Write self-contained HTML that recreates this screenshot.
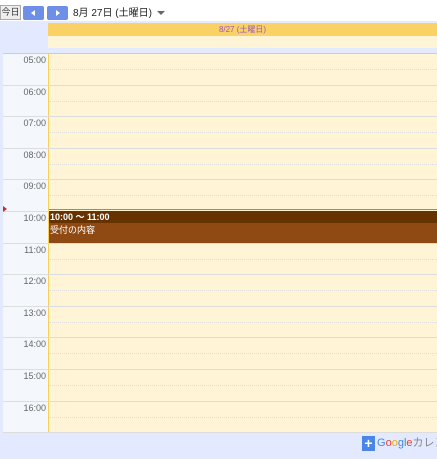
<!DOCTYPE html>
<html><head><meta charset="utf-8"><style>
*{margin:0;padding:0;box-sizing:border-box}
html,body{width:437px;height:459px;overflow:hidden}
body{background:#fff;font-family:"Liberation Sans","Noto Sans CJK JP",sans-serif;position:relative}
.abs{position:absolute}
</style></head><body>
<div class="abs" style="left:0;top:5px;width:21px;height:15px;border:1px solid #aaa;background:#eee;font-size:9px;line-height:13px;text-align:center;color:#333;white-space:nowrap;overflow:hidden">今日</div>
<div class="abs" style="left:23px;top:6px;width:21px;height:14px;background:#6d8fe8;border-radius:2px"></div>
<div class="abs" style="left:31px;top:10px;width:0;height:0;border-top:3px solid transparent;border-bottom:3px solid transparent;border-right:4px solid #fff"></div>
<div class="abs" style="left:47px;top:6px;width:21px;height:14px;background:#6d8fe8;border-radius:2px"></div>
<div class="abs" style="left:56px;top:10px;width:0;height:0;border-top:3px solid transparent;border-bottom:3px solid transparent;border-left:4px solid #fff"></div>
<div class="abs" style="left:73px;top:7px;font-size:10px;line-height:13px;color:#222;white-space:nowrap">8月 27日 (土曜日)</div>
<div class="abs" style="left:157px;top:11px;width:0;height:0;border-left:4px solid transparent;border-right:4px solid transparent;border-top:4px solid #666"></div>

<div class="abs" style="left:0;top:21px;width:437px;height:438px;background:#e3e9ff"></div>
<div class="abs" style="left:48px;top:23px;width:389px;height:13px;background:#fad165;font-size:8px;line-height:13px;text-align:center;color:#9a59c0">8/27 (土曜日)</div>
<div class="abs" style="left:48px;top:36px;width:389px;height:12px;background:#fff4d6"></div>
<div class="abs" style="left:3px;top:53px;width:434px;height:1px;background:#c4cbe8"></div>

<div class="abs" style="left:3px;top:54px;width:45px;height:379px;background:#f4f7fb"></div>
<div class="abs" style="left:48px;top:54px;width:389px;height:379px;background:#fff4d6"></div>
<div class="abs" style="left:48px;top:54px;width:1px;height:379px;background:#f9cf55"></div>

<div id="g"></div>
<script>
var h='';var names=['05:00','06:00','07:00','08:00','09:00','10:00','11:00','12:00','13:00','14:00','15:00','16:00'];
for(var i=0;i<12;i++){var y=Math.round(54+i*31.6);
if(i>0)h+='<div class="abs" style="left:3px;top:'+(y-1)+'px;width:434px;height:1px;background:#ddd"></div>';
h+='<div class="abs" style="left:3px;top:'+(y+1)+'px;width:43px;text-align:right;font-size:9px;color:#666">'+names[i]+'</div>';
h+='<div class="abs" style="left:49px;top:'+(y+15)+'px;width:388px;height:0;border-top:1px dotted #ddd"></div>';}
h+='<div class="abs" style="left:3px;top:432px;width:434px;height:1px;background:#ddd"></div>';
document.getElementById('g').innerHTML=h;
</script>
<div class="abs" style="left:49px;top:209px;width:388px;height:1px;background:#e07050"></div>
<div class="abs" style="left:3px;top:206px;width:0;height:0;border-top:3px solid transparent;border-bottom:3px solid transparent;border-left:4px solid #c03030"></div>
<div class="abs" style="left:49px;top:211px;width:388px;height:12px;background:#663300;color:#fff;font-size:9px;font-weight:bold;line-height:13px;padding-left:1px">10:00 ～ 11:00</div>
<div class="abs" style="left:49px;top:223px;width:388px;height:20px;background:#8f4a13;color:#fff;font-size:9px;line-height:14px;padding-left:1px">受付の内容</div>
<div class="abs" style="left:362px;top:436px;width:13px;height:15px;background:#4a86e8;color:#fff;font-size:14px;line-height:15px;text-align:center;font-weight:bold">+</div>
<div class="abs" style="left:377px;top:437px;width:60px;overflow:hidden;font-size:11px;line-height:13px;white-space:nowrap;color:#888"><span style="color:#4a86e8">G</span><span style="color:#e94335">o</span><span style="color:#f5b400">o</span><span style="color:#4a86e8">g</span><span style="color:#34a853">l</span><span style="color:#e94335">e</span>カレンダー</div>
</body></html>
